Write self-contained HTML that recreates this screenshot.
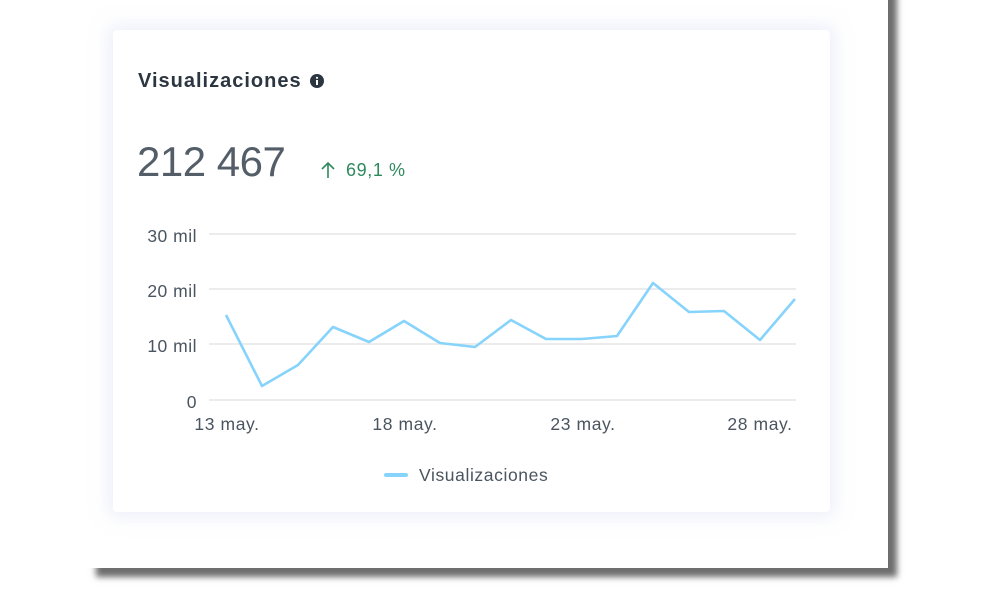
<!DOCTYPE html>
<html><head><meta charset="utf-8"><style>
html,body{margin:0;padding:0;background:#fff;width:1000px;height:600px;overflow:hidden;font-family:"Liberation Sans",sans-serif;}
.paper{position:absolute;left:87px;top:-20px;width:801px;height:588px;background:#fff;box-shadow:9px 9px 6px #6e6e6e;}
.card{position:absolute;left:113px;top:30px;width:717px;height:482px;background:#fff;border-radius:4px;box-shadow:0 0 16px 6px rgba(225,230,245,0.55);}
.t{position:absolute;color:#2b3640;white-space:nowrap;}
</style></head><body>
<div class="paper"></div>
<div class="card"></div>
<div class="t" style="left:138px;top:70px;font-size:20px;font-weight:bold;letter-spacing:1px;">Visualizaciones</div>
<svg style="position:absolute;left:309px;top:73px" width="16" height="16" viewBox="0 0 16 16"><circle cx="8" cy="8" r="7" fill="#2b3640"/><rect x="7" y="7" width="2" height="5" fill="#fff"/><circle cx="8" cy="4.8" r="1.1" fill="#fff"/></svg>
<div class="t" style="left:137px;top:138px;font-size:42px;color:#545e68;letter-spacing:-0.5px;">212 467</div>
<svg style="position:absolute;left:320px;top:160px" width="16" height="20" viewBox="0 0 16 20"><path d="M8 18V3M2 9L8 3L14 9" fill="none" stroke="#2e8a5e" stroke-width="1.6"/></svg>
<div class="t" style="left:346px;top:160px;font-size:18px;color:#2e8a5e;letter-spacing:0.6px;">69,1 %</div>
<svg style="position:absolute;left:0;top:0" width="1000" height="600">
<g stroke="#e6e6e6" stroke-width="1.5">
<line x1="209" y1="234" x2="796" y2="234"/><line x1="209" y1="289" x2="796" y2="289"/><line x1="209" y1="344" x2="796" y2="344"/><line x1="209" y1="400" x2="796" y2="400"/>
</g>
<g font-family="Liberation Sans, sans-serif" font-size="17.5" fill="#4a5560" text-anchor="end" letter-spacing="0.5">
<text x="197" y="242">30 mil</text><text x="197" y="297">20 mil</text><text x="197" y="352">10 mil</text><text x="197" y="408">0</text>
</g>
<g font-family="Liberation Sans, sans-serif" font-size="17.5" fill="#4a5560" text-anchor="middle" letter-spacing="0.6">
<text x="227" y="430">13 may.</text><text x="405" y="430">18 may.</text><text x="583" y="430">23 may.</text><text x="760" y="430">28 may.</text>
</g>
<polyline fill="none" stroke="#86d3fb" stroke-width="2.6" stroke-linejoin="round" points="226,315 262,386 298,365 333,327 369,342 404,321 440,343 475,347 511,320 546,339 582,339 617,336 653,283 689,312 724,311 760,340 795,299"/>
<line x1="386" y1="475" x2="406" y2="475" stroke="#86d3fb" stroke-width="4" stroke-linecap="round"/>
<text x="419" y="481" font-family="Liberation Sans, sans-serif" font-size="17.5" fill="#4a5560" letter-spacing="0.6">Visualizaciones</text>
</svg>
</body></html>
